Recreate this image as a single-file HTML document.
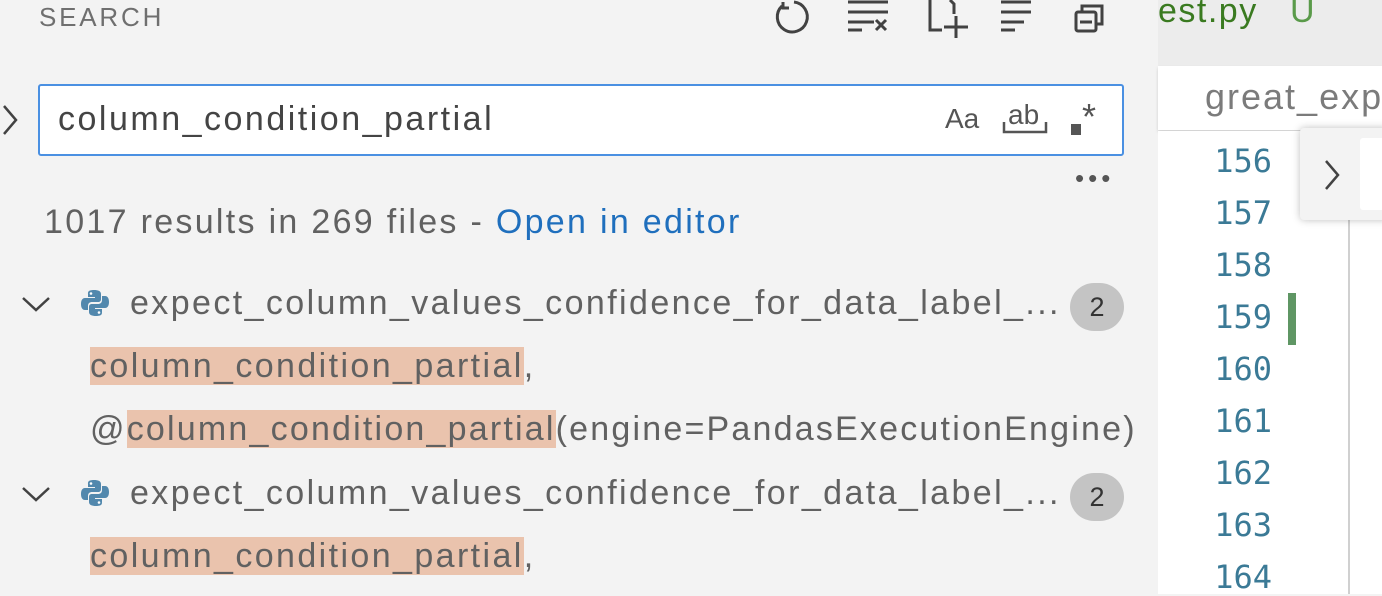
<!DOCTYPE html>
<html><head><style>
*{margin:0;padding:0;box-sizing:border-box}
body{width:1382px;height:594px;overflow:hidden;background:#f3f3f3;font-family:"Liberation Sans",sans-serif;position:relative;color:#616161}
.a{position:absolute;white-space:nowrap}
.hl{background:#eac3ad}
.t{font-size:34px;color:#616161;letter-spacing:2.4px}
.ln{position:absolute;right:110px;font-family:"DejaVu Sans Mono","Liberation Mono",monospace;font-size:32px;color:#3b7a96;width:120px;text-align:right}
.badge{position:absolute;left:1070px;width:54px;height:48px;border-radius:24px;background:#c4c4c4;color:#333;font-size:27px;text-align:center;line-height:48px}
</style></head><body>
<div class="a" style="left:39px;top:2px;font-size:26px;color:#6f6f6f;letter-spacing:2.8px">SEARCH</div>
<svg class="a" style="left:770px;top:0" width="350" height="40" fill="none" stroke="#424242" stroke-width="3">
<path d="M12 6 A15 15 0 1 0 24 2"/>
<path d="M13 2 L13 8 L19 8"/>
<path d="M78 2 H118 M78 12 H118 M78 22 H104 M78 30 H92 M106 20 L116 30 M116 20 L106 30"/>
<path d="M160 0 V30 H172 M180 0 L184 4 V14 M186 16 V38 M174 27 H198"/>
<path d="M231 2 H261 M231 12 H261 M231 22 H254 M231 30 H245"/>
<rect x="306" y="12" width="20" height="19" rx="2"/><path d="M312 12 V6 H332 V24 H326 M310 22 H322"/>
</svg>
<div class="a" style="left:1158px;top:0;width:224px;height:66px;background:#ececec"></div>
<div class="a" style="left:1158px;top:-8px;font-size:34px;color:#3a7a20;letter-spacing:1.5px">est.py</div>
<div class="a" style="left:1290px;top:-8px;font-size:34px;color:#5a9a4a">U</div>
<div class="a" style="left:1158px;top:66px;width:224px;height:64px;background:#fff;box-shadow:0 2px 3px rgba(0,0,0,.15)"></div>
<div class="a" style="left:1205px;top:76px;font-size:36px;color:#7b7b7b;letter-spacing:2px">great_expe</div>
<div class="a" style="left:1158px;top:131px;width:224px;height:463px;background:#fff"></div>
<div class="ln" style="top:142px">156</div><div class="ln" style="top:194px">157</div><div class="ln" style="top:246px">158</div><div class="ln" style="top:298px">159</div><div class="ln" style="top:350px">160</div><div class="ln" style="top:402px">161</div><div class="ln" style="top:454px">162</div><div class="ln" style="top:506px">163</div><div class="ln" style="top:558px">164</div>
<div class="a" style="left:1288px;top:293px;width:8px;height:52px;background:#5f9664"></div>
<div class="a" style="left:1348px;top:220px;width:2px;height:374px;background:#d0d0d0"></div>
<div class="a" style="left:1300px;top:128px;width:90px;height:92px;background:#f3f3f3;box-shadow:0 0 8px rgba(0,0,0,.25);border-radius:4px"></div>
<div class="a" style="left:1360px;top:138px;width:30px;height:72px;background:#fff;border-radius:3px"></div>
<svg class="a" style="left:1322px;top:158px" width="20" height="34" fill="none" stroke="#424242" stroke-width="2.5"><path d="M4 3 L16 17 L4 31"/></svg>
<svg class="a" style="left:0;top:102px" width="20" height="36" fill="none" stroke="#424242" stroke-width="2.5"><path d="M4 4 L16 18 L4 32"/></svg>
<div class="a" style="left:38px;top:84px;width:1086px;height:72px;background:#fff;border:2px solid #4a90e2;border-radius:3px"></div>
<div class="a" style="left:58px;top:100px;font-size:34px;color:#444;letter-spacing:2.5px">column_condition_partial</div>
<div class="a" style="left:945px;top:103px;font-size:28px;color:#555">Aa</div>
<div class="a" style="left:1008px;top:99px;font-size:28px;color:#555">ab</div>
<svg class="a" style="left:1000px;top:120px" width="50" height="16" fill="none" stroke="#555" stroke-width="2.5"><path d="M4 2 V12 H46 V2"/></svg>
<div class="a" style="left:1071px;top:124px;width:10px;height:11px;background:#555"></div>
<div class="a" style="left:1082px;top:96px;font-size:36px;color:#555">*</div>
<div class="a" style="left:1075px;top:163px;font-size:26px;color:#555;letter-spacing:4px">•••</div>
<div class="a t" style="left:44px;top:203px;letter-spacing:2.3px">1017 results in 269 files - <span style="color:#1f6fbd">Open in editor</span></div>
<svg class="a" style="left:20px;top:294px" width="32" height="20" fill="none" stroke="#424242" stroke-width="2.5"><path d="M3 4 L16 16 L29 4"/></svg>
<svg class="a" style="left:80px;top:288px" width="30" height="30" viewBox="0 0 30 30"><path d="M14 2 C8 2 8 4 8 6 V9 H15 V10 H5 C2 10 1 13 1 16 C1 19 2 22 5 22 H8 V18 C8 15 10 14 12 14 H18 C20 14 21 13 21 11 V6 C21 3 18 2 14 2Z" fill="#5288ad"/><path d="M16 28 C22 28 22 26 22 24 V21 H15 V20 H25 C28 20 29 17 29 14 C29 11 28 8 25 8 H22 V12 C22 15 20 16 18 16 H12 C10 16 9 17 9 19 V24 C9 27 12 28 16 28Z" fill="#5288ad"/><circle cx="11" cy="5.5" r="1.3" fill="#fff"/><circle cx="19" cy="24.5" r="1.3" fill="#fff"/></svg>
<div class="a t" style="left:130px;top:284px">expect_column_values_confidence_for_data_label_...</div>
<div class="badge" style="top:283px">2</div>
<div class="a t" style="left:90px;top:347px"><span class="hl">column_condition_partial</span>,</div>
<div class="a t" style="left:90px;top:410px;letter-spacing:2.2px">@<span class="hl">column_condition_partial</span>(engine=PandasExecutionEngine)</div>
<svg class="a" style="left:20px;top:484px" width="32" height="20" fill="none" stroke="#424242" stroke-width="2.5"><path d="M3 4 L16 16 L29 4"/></svg>
<svg class="a" style="left:80px;top:478px" width="30" height="30" viewBox="0 0 30 30"><path d="M14 2 C8 2 8 4 8 6 V9 H15 V10 H5 C2 10 1 13 1 16 C1 19 2 22 5 22 H8 V18 C8 15 10 14 12 14 H18 C20 14 21 13 21 11 V6 C21 3 18 2 14 2Z" fill="#5288ad"/><path d="M16 28 C22 28 22 26 22 24 V21 H15 V20 H25 C28 20 29 17 29 14 C29 11 28 8 25 8 H22 V12 C22 15 20 16 18 16 H12 C10 16 9 17 9 19 V24 C9 27 12 28 16 28Z" fill="#5288ad"/><circle cx="11" cy="5.5" r="1.3" fill="#fff"/><circle cx="19" cy="24.5" r="1.3" fill="#fff"/></svg>
<div class="a t" style="left:130px;top:474px">expect_column_values_confidence_for_data_label_...</div>
<div class="badge" style="top:473px">2</div>
<div class="a t" style="left:90px;top:537px"><span class="hl">column_condition_partial</span>,</div>
</body></html>
